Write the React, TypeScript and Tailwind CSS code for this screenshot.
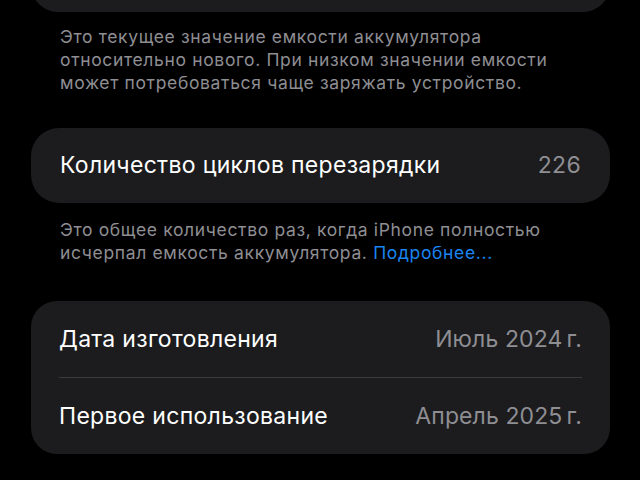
export default function App() {
  const font = { fontFamily: 'Inter, "Noto Sans", sans-serif' };
  return (
    <div className="w-[640px] h-[480px] overflow-hidden bg-black" style={font}>
      <div className="pl-[31px] pr-[30px]">
        <div className="-mt-[64px] h-[76px] rounded-[27px] bg-[#1c1c1e]" />
        <p className="px-[29px] pt-[13px] text-[17.5px] leading-[23px] text-[#8e8e93] tracking-[0.65px]">
          Это текущее значение емкости аккумулятора относительно нового. При низком значении емкости может потребоваться чаще заряжать устройство.
        </p>
        <div className="mt-[34px] h-[75px] rounded-[28px] bg-[#1c1c1e] px-[29px] flex items-center justify-between">
          <span className="text-[23px] text-white tracking-[0.3px]">Количество циклов перезарядки</span>
          <span className="text-[23px] text-[#8e8e93] tracking-[0.3px]">226</span>
        </div>
        <p className="px-[29px] pt-[15px] text-[17.5px] leading-[23px] text-[#8e8e93] tracking-[0.65px]">
          Это общее количество раз, когда iPhone полностью исчерпал емкость аккумулятора.{' '}
          <span className="text-[#1a84f0]">Подробнее...</span>
        </p>
        <div className="mt-[37px] rounded-[26px] bg-[#1c1c1e] px-[28px]">
          <div className="h-[76px] flex items-center justify-between">
            <span className="text-[23px] text-white tracking-[0.3px]">Дата изготовления</span>
            <span className="text-[23px] text-[#8e8e93] tracking-[0.1px]">Июль 2024{'\u202F'}г.</span>
          </div>
          <div className="h-px bg-[#3a3a3c]" />
          <div className="h-[76px] flex items-center justify-between">
            <span className="text-[23px] text-white tracking-[0.3px]">Первое использование</span>
            <span className="text-[23px] text-[#8e8e93] tracking-[0.1px]">Апрель 2025{'\u202F'}г.</span>
          </div>
        </div>
      </div>
    </div>
  );
}
